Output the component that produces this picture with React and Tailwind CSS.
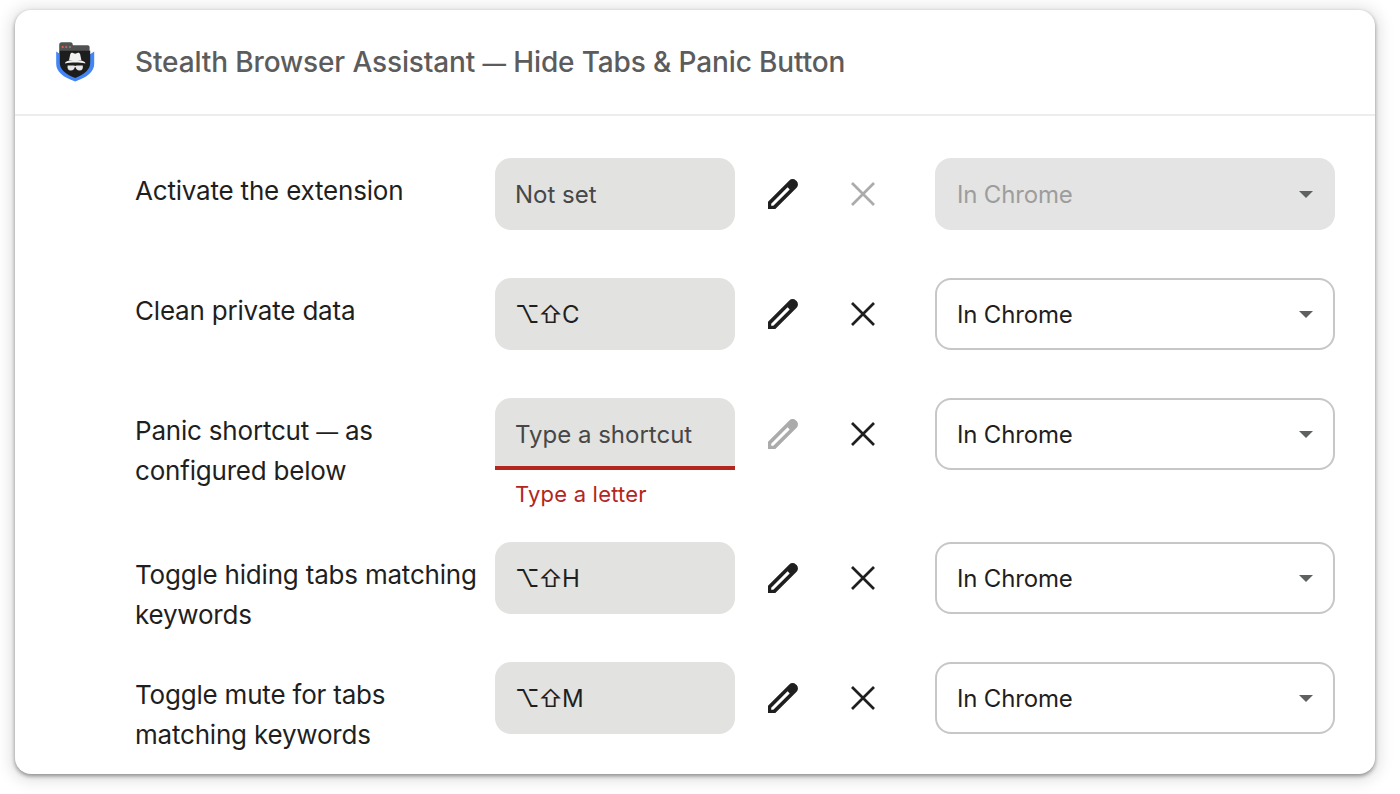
import React from 'react';
import clsx from 'clsx';

const commands = [
  { label: 'Activate the extension', placeholder: 'Not set', disabled: true },
  { label: 'Clean private data', shortcut: '⌥⇧C' },
  {
    label: 'Panic shortcut — as configured below',
    placeholder: 'Type a shortcut',
    error: 'Type a letter',
    editing: true,
  },
  { label: 'Toggle hiding tabs matching keywords', shortcut: '⌥⇧H' },
  { label: 'Toggle mute for tabs matching keywords', shortcut: '⌥⇧M' },
];

function ExtensionIcon() {
  return (
    <svg className="h-10 w-10" viewBox="0 0 40 40">
      <path d="M1.200 9.500L5 12h30.500l3.700-2.500v12.300c0 8-7 13.700-19 17.700C8.200 35.500 1.200 29.800 1.200 21.800z" fill="#4285f4" />
      <path d="M4.200 2.700c0-1.500.9-2.400 2.400-2.400h8.900c1.500 0 2.200.9 2.400 3h14.700c1.300 0 2 .8 2 2V12H4.200z" fill="#505152" />
      <path d="M4.800 8.700h30.400v12c0 6.800-5.500 11.300-15 15.300-9.700-4-15.400-8.500-15.400-15.300z" fill="#1d1d1d" />
      <circle cx="7.700" cy="5" r="1.100" fill="#e8604f" />
      <circle cx="11.300" cy="5" r="1.100" fill="#c96a61" />
      <circle cx="15" cy="5" r="1.100" fill="#858585" />
      <path d="M14 18.300l1.200-5.800c.4-1.600 1.500-2.100 2.800-1.600l2.200.8 2.200-.8c1.300-.5 2.400 0 2.800 1.600l1.200 5.800z" fill="#f1f1f1" />
      <path d="M10 21.500c0-2 4-3.400 10.200-3.400s10.200 1.400 10.200 3.400c-3-.8-6.200-1.100-10.200-1.100s-7.200.3-10.200 1.100z" fill="#f1f1f1" />
      <path d="M12.600 23.500h6.200l1.400.6 1.400-.6h6.200c.5 3.200-.7 5-3.200 5-2.400 0-3.700-1.200-3.900-3.200h-1c-.2 2-1.500 3.200-3.900 3.200-2.500 0-3.700-1.800-3.200-5z" fill="#e6e6e6" />
    </svg>
  );
}

function PencilIcon() {
  return (
    <svg className="h-8 w-8" viewBox="0 0 32 32" fill="currentColor">
      <path
        fillRule="evenodd"
        d="M1 31v-7.300L22.300 2.400a4.700 4.700 0 0 1 6.600 0l.7.700a4.700 4.700 0 0 1 0 6.600L8.300 31zM4.200 27.800h2.100L22.700 11.400 20.600 9.300 4.200 25.700z"
      />
    </svg>
  );
}

function CloseIcon() {
  return (
    <svg className="h-8 w-8" viewBox="0 0 32 32" fill="none" stroke="currentColor" strokeWidth="2.700">
      <path d="M5 5l22 22M27 5L5 27" />
    </svg>
  );
}

// Text with its em dashes set a little narrower than the font draws them
function DashedText({ children }) {
  return children.split('—').map((part, i) => (
    <React.Fragment key={i}>
      {i > 0 && <span className="text-[0.84em] leading-none">—</span>}
      {part}
    </React.Fragment>
  ));
}

function IconButton({ disabled, children }) {
  return (
    <button
      disabled={disabled}
      className={clsx(
        'flex h-[72px] w-20 items-center justify-center',
        disabled ? 'text-[#ababab]' : 'text-[#1f1f1f]'
      )}
    >
      {children}
    </button>
  );
}

function ShortcutInput({ shortcut, placeholder, error }) {
  return (
    <div className="w-60">
      <div
        className={clsx(
          'flex h-[72px] items-center bg-[#e2e2e0] px-5 text-2xl',
          error ? 'rounded-t-2xl border-b-4 border-[#b3261e] pt-1.5' : 'rounded-2xl pt-0.5',
          shortcut ? 'tracking-[-1.2px] text-[#1f1f1f]' : 'text-[#474747]'
        )}
      >
        {shortcut || placeholder}
      </div>
      {error && (
        <p className="h-12 px-5 pt-2 text-[22px] leading-8 tracking-[0.2px] text-[#b3261e]">
          {error}
        </p>
      )}
    </div>
  );
}

function ScopeSelect({ disabled }) {
  return (
    <button
      disabled={disabled}
      className={clsx(
        'flex h-[72px] w-[400px] items-center justify-between rounded-2xl border-2 px-5 pt-0.5 text-2xl tracking-[-0.17px]',
        disabled
          ? 'border-[#e4e4e4] bg-[#e4e4e4] text-[#9d9d9d]'
          : 'border-[#c7c7c7] bg-white text-[#1f1f1f]'
      )}
    >
      In Chrome
      <svg className="-mt-0.5 h-[7px] w-3.5" viewBox="0 0 14 7" fill="#5f6061">
        <path d="M0 0h14L7 7z" />
      </svg>
    </button>
  );
}

function CommandRow({ label, shortcut, placeholder, error, editing, disabled }) {
  return (
    <div className="flex items-start">
      <div className="w-[360px] pt-[13px] pr-3 text-[26px] leading-10 tracking-[-0.2px] text-[#1f1f1f]">
        <DashedText>{label}</DashedText>
      </div>
      <ShortcutInput shortcut={shortcut} placeholder={placeholder} error={error} />
      <div className="flex w-[200px] pl-2">
        <IconButton disabled={editing}>
          <PencilIcon />
        </IconButton>
        <IconButton disabled={disabled}>
          <CloseIcon />
        </IconButton>
      </div>
      <ScopeSelect disabled={disabled} />
    </div>
  );
}

function App() {
  return (
    <div className="h-[794px] overflow-hidden bg-white pt-2.5 pl-[15px] font-['Inter',sans-serif]">
      <div className="h-[764px] w-[1360px] rounded-2xl bg-white shadow-[0_2px_4px_rgba(0,0,0,0.4),0_2px_16px_4px_rgba(0,0,0,0.13)]">
        <div className="flex h-[106px] items-center border-b-2 border-[#ededed] pl-10">
          <ExtensionIcon />
          <h1 className="ml-10 text-[28px] font-medium tracking-[-0.13px] text-[#5c5c5c]">
            <DashedText>Stealth Browser Assistant — Hide Tabs & Panic Button</DashedText>
          </h1>
        </div>
        <div className="flex flex-col pt-[42px] pl-[120px]">
          {commands.map((command) => (
            <div key={command.label} className={command.error ? 'mb-6' : 'h-[120px]'}>
              <CommandRow {...command} />
            </div>
          ))}
        </div>
      </div>
    </div>
  );
}

export default App;
